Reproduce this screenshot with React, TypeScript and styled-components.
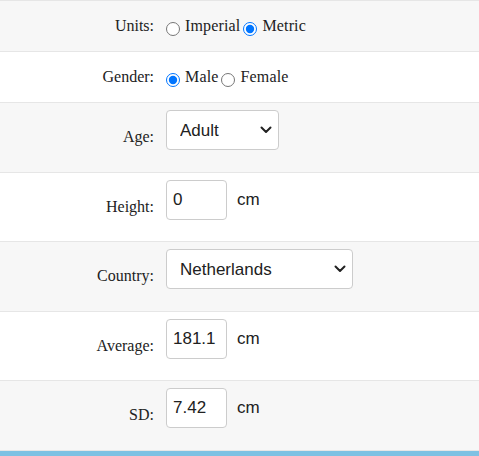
import React, { useState } from "react";
import styled, { createGlobalStyle } from "styled-components";

const Global = createGlobalStyle`
  html, body { margin: 0; padding: 0; background: #fff; }
  body { font-family: "Liberation Serif", "Times New Roman", serif; color: #222; }
`;

const Form = styled.div`
  display: flex;
  flex-direction: column;
  border-top: 1px solid #e6e6e6;
`;

const Row = styled.div<{ $tall?: boolean; $shade?: boolean }>`
  display: grid;
  grid-template-columns: 160px 1fr;
  min-height: ${(p) => (p.$tall ? "68.5px" : "50px")};
  background: ${(p) => (p.$shade ? "#f7f7f7" : "#ffffff")};
  border-bottom: 1px solid #e6e6e6;
`;

const Label = styled.label`
  align-self: center;
  text-align: right;
  padding-right: 6px;
  font-size: 16px;
  line-height: 20px;
`;

const Control = styled.div<{ $top?: boolean }>`
  align-self: ${(p) => (p.$top ? "start" : "center")};
  padding: ${(p) => (p.$top ? "7px 0 0 6px" : "0 0 0 6px")};
  font-size: 16px;
  line-height: 20px;
`;

const RadioLabel = styled.label`
  font-size: 16px;
  margin-right: 3px;
  letter-spacing: 0.15px;
`;

const Radio = styled.input`
  width: 14px;
  height: 14px;
  margin: 0 5px 0 0;
  vertical-align: -5px;
  accent-color: #0075ff;
`;

const SelectWrap = styled.span<{ $w: number }>`
  position: relative;
  display: inline-block;
  width: ${(p) => p.$w}px;
`;

const Select = styled.select`
  appearance: none;
  -webkit-appearance: none;
  width: 100%;
  height: 40px;
  box-sizing: border-box;
  border: 1px solid #cccccc;
  border-radius: 4px;
  background: #fff;
  padding: 0 30px 0 13px;
  font-family: "Liberation Sans", Arial, sans-serif;
  font-size: 17px;
  color: #212121;
  outline: none;
`;

const Chevron = styled.svg`
  position: absolute;
  right: 7px;
  top: 15px;
  width: 12px;
  height: 9px;
  pointer-events: none;
`;

const Input = styled.input`
  width: 61px;
  height: 40px;
  box-sizing: border-box;
  border: 1px solid #cccccc;
  border-radius: 4px;
  padding: 0 6px;
  font-family: "Liberation Sans", Arial, sans-serif;
  font-size: 17px;
  color: #212121;
  outline: none;
  vertical-align: baseline;
`;

const Unit = styled.span`
  margin-left: 10px;
  font-family: "Liberation Sans", Arial, sans-serif;
  font-size: 17px;
  color: #212121;
`;

const Footer = styled.div`
  height: 7px;
  background: #7dc1e3;
`;

const Arrow = () => (
  <Chevron viewBox="0 0 12 9">
    <path d="M1.5 2.5 L6 7 L10.5 2.5" fill="none" stroke="#222" strokeWidth="2" strokeLinecap="round" strokeLinejoin="round" />
  </Chevron>
);

export default function App() {
  const [units, setUnits] = useState("metric");
  const [gender, setGender] = useState("male");
  return (
    <>
      <Global />
      <Form>
        <Row $shade>
          <Label>Units:</Label>
          <Control>
            <Radio type="radio" name="units" checked={units === "imperial"} onChange={() => setUnits("imperial")} />
            <RadioLabel>Imperial</RadioLabel>
            <Radio type="radio" name="units" checked={units === "metric"} onChange={() => setUnits("metric")} />
            <RadioLabel>Metric</RadioLabel>
          </Control>
        </Row>
        <Row>
          <Label>Gender:</Label>
          <Control>
            <Radio type="radio" name="gender" checked={gender === "male"} onChange={() => setGender("male")} />
            <RadioLabel>Male</RadioLabel>
            <Radio type="radio" name="gender" checked={gender === "female"} onChange={() => setGender("female")} />
            <RadioLabel>Female</RadioLabel>
          </Control>
        </Row>
        <Row $tall $shade>
          <Label>Age:</Label>
          <Control $top>
            <SelectWrap $w={113}>
              <Select defaultValue="adult">
                <option value="adult">Adult</option>
                <option value="child">Child</option>
              </Select>
              <Arrow />
            </SelectWrap>
          </Control>
        </Row>
        <Row $tall>
          <Label>Height:</Label>
          <Control $top>
            <Input defaultValue="0" />
            <Unit>cm</Unit>
          </Control>
        </Row>
        <Row $tall $shade>
          <Label>Country:</Label>
          <Control $top>
            <SelectWrap $w={187}>
              <Select defaultValue="nl">
                <option value="nl">Netherlands</option>
              </Select>
              <Arrow />
            </SelectWrap>
          </Control>
        </Row>
        <Row $tall>
          <Label>Average:</Label>
          <Control $top>
            <Input defaultValue="181.1" />
            <Unit>cm</Unit>
          </Control>
        </Row>
        <Row $tall $shade>
          <Label>SD:</Label>
          <Control $top>
            <Input defaultValue="7.42" />
            <Unit>cm</Unit>
          </Control>
        </Row>
        <Footer />
      </Form>
    </>
  );
}
